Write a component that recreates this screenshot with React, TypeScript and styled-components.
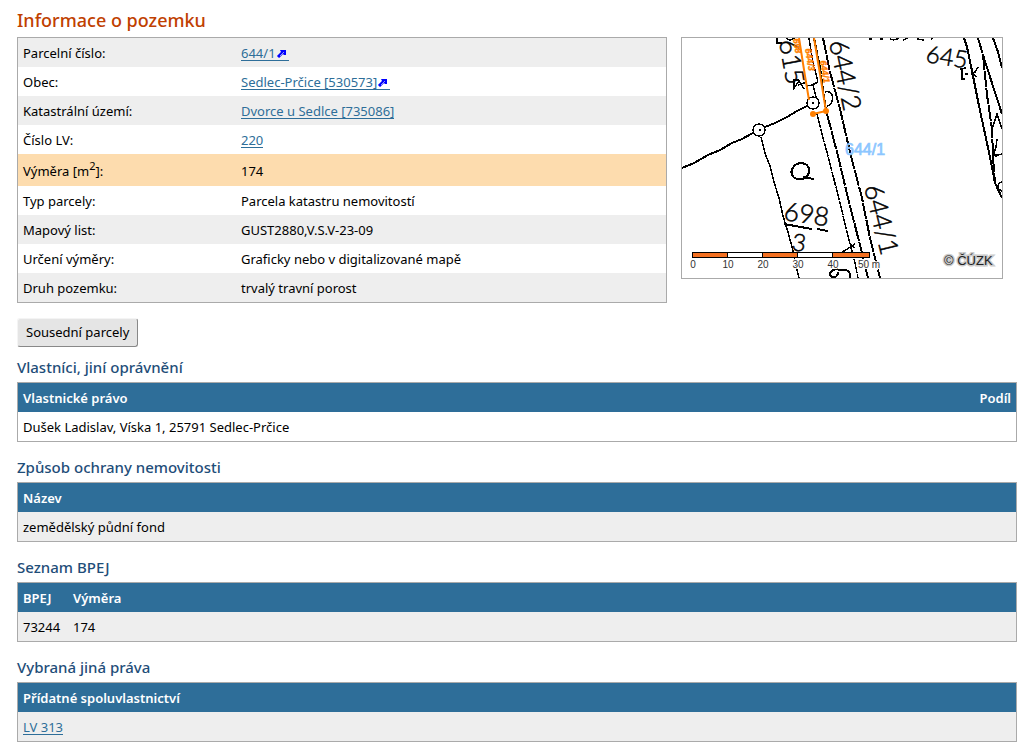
import React from "react";
import styled, { createGlobalStyle } from "styled-components";

const GlobalStyle = createGlobalStyle`
  body {
    margin: 0;
    background: #fff;
    color: #000;
    font: 13px/19px "Noto Sans", "Open Sans", sans-serif;
  }
  * { box-sizing: border-box; }
`;

const Page = styled.main`
  padding: 8px 15px 8px 17px;
`;

const Title = styled.h1`
  margin: 0 0 5px;
  color: #c04000;
  font-size: 18px;
  font-weight: 500;
  line-height: 24px;
`;

const Overview = styled.div`
  display: flex;
  align-items: flex-start;
  gap: 14px;
  padding-right: 14px;
`;

const InfoTable = styled.table`
  flex: 1;
  border: 1px solid #aaa;
  border-collapse: separate;
  border-spacing: 0;
`;

const InfoRow = styled.tr<{ $tone: "grey" | "white" | "accent" }>`
  height: ${(p) => (p.$tone === "accent" ? 32 : 29)}px;
  background: ${(p) => ({ grey: "#eee", white: "#fff", accent: "#fddcae" })[p.$tone]};
`;

const InfoLabel = styled.th`
  width: 218px;
  padding: 2px 5px 0;
  font-weight: 400;
  text-align: left;

  sup {
    font-size: 11px;
    line-height: 0;
    vertical-align: 6px;
  }
`;

const InfoValue = styled.td`
  padding: 2px 5px 0;
`;

const Link = styled.a`
  display: inline-block;
  border-bottom: 1px solid #2e6e99;
  color: #2e6e99;
  line-height: 13px;
  text-decoration: none;
`;

const ArrowIcon = styled.svg`
  width: 13px;
  height: 9px;
`;

const MapFrame = styled.figure`
  flex: 0 0 322px;
  margin: 0;
  border: 1px solid #aaa;

  svg {
    display: block;
    width: 100%;
  }
`;

const Button = styled.button`
  display: block;
  height: 29px;
  margin-top: 15px;
  padding: 0 8px;
  border: 1px solid;
  border-color: #f4f4f4 #888 #888 #f4f4f4;
  border-radius: 3px;
  background: #e5e5e5;
  color: #000;
  font: inherit;
`;

const Section = styled.section`
  padding: 10px 0 5px;
`;

const Heading = styled.h2`
  margin: 0 0 5px;
  color: #1f4e79;
  font-size: 15px;
  font-weight: 500;
  line-height: 20px;
`;

const DataTable = styled.table`
  width: 100%;
  border: 1px solid #aaa;
  border-collapse: separate;
  border-spacing: 0;
`;

const HeadCell = styled.th<{ $width?: number; $end?: boolean }>`
  width: ${(p) => (p.$width ? `${p.$width}px` : "auto")};
  height: 29px;
  padding: 1px 5px 0;
  background: #2e6e99;
  color: #fff;
  font-weight: 600;
  text-align: ${(p) => (p.$end ? "right" : "left")};
`;

const DataCell = styled.td<{ $plain?: boolean }>`
  height: 29px;
  padding: 1px 5px 0;
  background: ${(p) => (p.$plain ? "#fff" : "#eee")};
`;

const Handwritten = styled.text`
  fill: #000;
  stroke: #000;
  stroke-width: 0.5px;
  font-family: Lato, sans-serif;
  font-weight: 300;
`;

const ParcelTag = styled.text`
  fill: #ff7f00;
  stroke: #ff7f00;
  stroke-width: 0.4px;
  font: italic 700 9px "Liberation Sans", sans-serif;
`;

const ScaleText = styled.text`
  fill: #333;
  stroke: #fff;
  stroke-width: 2px;
  paint-order: stroke;
  font: 10px "Liberation Sans", sans-serif;
  text-anchor: middle;
`;

const SelectedLabel = styled.text`
  fill: #8cc6ff;
  stroke: #8cc6ff;
  stroke-width: 0.7px;
  font: 16px "Liberation Sans", sans-serif;
`;

const Copyright = styled.text`
  fill: #222;
  stroke: #ccc;
  stroke-width: 3px;
  paint-order: stroke;
  font: 13px "Liberation Sans", sans-serif;
`;

function External() {
  return (
    <ArrowIcon viewBox="0 0 13 9" aria-hidden="true">
      <path d="M2 8 7 3" stroke="#00f" strokeWidth="3" />
      <path d="M4 1H10V6L8 6 5 3Z" fill="#00f" />
      <path d="M4 7 8 3" stroke="#dde" strokeWidth="0.7" />
    </ArrowIcon>
  );
}

function CadastralMap() {
  return (
    <MapFrame>
      <svg viewBox="0 0 320 240" role="img" aria-label="Katastrální mapa">
        <rect width="320" height="240" fill="#fff" />
        <g fill="none" stroke="#000" strokeWidth="1.5" shapeRendering="crispEdges">
          {/* parcel boundaries left of the road */}
          <path strokeWidth="2" d="M0 130 12 125 26 117 38 112 50 105 60 101 71 95M83 89 93 85 105 79 115 73 125 68" />
          <path d="M79 99 82 111 84 118 88 128 92 144 97 160 101 178 106 194 111 213 114 228 117 240" />
          {/* road */}
          <path strokeDasharray="14 1" d="M127 0 131 24 136 44M135 76 141 100 146 118 158 165 164 190 173 225 176 240" />
          <path strokeWidth="2" strokeDasharray="18 1" d="M132 0 138 30 144 72 150 95 156 118 166 160 180 215 186 240" />
          <path strokeDasharray="16 1" strokeWidth="2" d="M141 0 148 34 158 71 164 97 169 118 180 160 188 200 198 240" />
          {/* boundaries by the right edge */}
          <path strokeWidth="2" d="M282 0 285 9 289 28 297 68 308 119 313 145 320 160" />
          <path strokeWidth="2" strokeDasharray="16 1" d="M296 0 301 17 305 57 310 91 311 119 313 145" />
          <path strokeWidth="2" d="M301 17 309 42 320 76M311 0 316 14 320 30" />
          <path d="M310 91 315 76 320 91M315 101 314 109 311 118 320 116M312 114 314 119M320 144Q315 145 316 151L320 153" />
          {/* boundary marks */}
          <circle cx="77" cy="92" r="6" />
          <circle cx="131" cy="65" r="6" />
          <path d="M143 54C149 52 152 58 150 63C149 67 147 68 145 68M125 48 130 47 136 44M131 47 134 59" />
          <path d="M112 42V50L117 43 122 51M111 42H117M116 47 125 44" />
          <path d="M78 91V93M131 64V66" strokeWidth="2" />
          {/* numbers cut by the top edge */}
          <path d="M187 1H190M198 1H201M208 1Q213 3 217 0M221 2 226 0M235 1 242 2M249 1 251 0" />
          <path d="M95 0V5H100M104 0Q109 4 112 0" />
          {/* land use marks */}
          <path strokeWidth="2" d="M118 125C112 126 108 132 110 137C113 143 123 142 126 137C129 131 126 125 118 125M121 139 132 141" />
          <path d="M278 31 284 30M280 31V41M283 36H286M289 36 293 34 296 29M291 35 294 39M279 41H283" />
          {/* fraction bar */}
          <path strokeWidth="2" d="M102 186 130 191M135 191 146 193" />
          <path d="M159 215 173 206M168 205 172 210" />
          <path strokeWidth="2" d="M158 232C150 229 145 237 150 239Q156 240 156 234M158 232Q169 230 168 240" />
        </g>
        <Handwritten fontSize="26" transform="translate(97 3) rotate(80)">615</Handwritten>
        <Handwritten fontSize="26" transform="translate(147 4) rotate(78)">644/2</Handwritten>
        <Handwritten fontSize="24" transform="translate(243 24) rotate(9)">645</Handwritten>
        <Handwritten fontSize="26" transform="translate(182 149) rotate(76)">644/1</Handwritten>
        <Handwritten fontSize="26" transform="translate(101 182) rotate(8)">698</Handwritten>
        <Handwritten fontSize="24" transform="translate(109 212) rotate(8)">3</Handwritten>

        <g fill="none" stroke="#ff7f00" strokeWidth="2">
          <path d="M117 0 123 38 127 62M132 0 138 36 144 73 131 76" />
        </g>
        <circle cx="131" cy="76" r="3" fill="#ff7f00" />
        <circle cx="144" cy="73" r="3" fill="#ff7f00" />
        <ParcelTag transform="translate(111 1) rotate(80)">698</ParcelTag>
        <ParcelTag transform="translate(123 11) rotate(80)">644/3</ParcelTag>
        <ParcelTag transform="translate(138 23) rotate(80)">644/1</ParcelTag>

        <SelectedLabel x="163" y="117">644/1</SelectedLabel>

        <g stroke="#000" shapeRendering="crispEdges">
          {[0, 1, 2, 3, 4].map((n) => (
            <rect key={n} x={10 + n * 35} y="214" width={n === 4 ? 37 : 35} height="5" fill={n % 2 ? "#fff" : "#f37021"} />
          ))}
        </g>
        {["0", "10", "20", "30", "40", "50 m"].map((label, n) => (
          <ScaleText key={label} x={n === 5 ? 187 : 11 + n * 35} y="230">{label}</ScaleText>
        ))}
        <Copyright x="262" y="227">© ČÚZK</Copyright>
      </svg>
    </MapFrame>
  );
}

type Info = { label: React.ReactNode; value: React.ReactNode; accent?: boolean };

const info: Info[] = [
  { label: "Parcelní číslo:", value: <Link href="#parcela">644/1<External /></Link> },
  { label: "Obec:", value: <Link href="#obec">Sedlec-Prčice [530573]<External /></Link> },
  { label: "Katastrální území:", value: <Link href="#uzemi">Dvorce u Sedlce [735086]</Link> },
  { label: "Číslo LV:", value: <Link href="#lv220">220</Link> },
  { label: <>Výměra [m<sup>2</sup>]:</>, value: "174", accent: true },
  { label: "Typ parcely:", value: "Parcela katastru nemovitostí" },
  { label: "Mapový list:", value: "GUST2880,V.S.V-23-09" },
  { label: "Určení výměry:", value: "Graficky nebo v digitalizované mapě" },
  { label: "Druh pozemku:", value: "trvalý travní porost" },
];

type Column = { name: string; width?: number; end?: boolean };

function DataSection({ title, columns, cells, plain }: {
  title: string;
  columns: Column[];
  cells: React.ReactNode[];
  plain?: boolean;
}) {
  return (
    <Section>
      <Heading>{title}</Heading>
      <DataTable>
        <thead>
          <tr>
            {columns.map((c) => (
              <HeadCell key={c.name} scope="col" $width={c.width} $end={c.end}>{c.name}</HeadCell>
            ))}
          </tr>
        </thead>
        <tbody>
          <tr>
            {cells.map((cell, n) => (
              <DataCell key={n} $plain={plain}>{cell}</DataCell>
            ))}
          </tr>
        </tbody>
      </DataTable>
    </Section>
  );
}

export default function App() {
  return (
    <>
      <GlobalStyle />
      <Page>
        <Title>Informace o pozemku</Title>
        <Overview>
          <InfoTable>
            <tbody>
              {info.map((row, n) => (
                <InfoRow key={n} $tone={row.accent ? "accent" : n % 2 ? "white" : "grey"}>
                  <InfoLabel scope="row">{row.label}</InfoLabel>
                  <InfoValue>{row.value}</InfoValue>
                </InfoRow>
              ))}
            </tbody>
          </InfoTable>
          <CadastralMap />
        </Overview>
        <Button type="button">Sousední parcely</Button>
        <DataSection
          title="Vlastníci, jiní oprávnění"
          columns={[{ name: "Vlastnické právo" }, { name: "Podíl", end: true }]}
          cells={["Dušek Ladislav, Víska 1, 25791 Sedlec-Prčice", ""]}
          plain
        />
        <DataSection
          title="Způsob ochrany nemovitosti"
          columns={[{ name: "Název" }]}
          cells={["zemědělský půdní fond"]}
        />
        <DataSection
          title="Seznam BPEJ"
          columns={[{ name: "BPEJ", width: 50 }, { name: "Výměra" }]}
          cells={["73244", "174"]}
        />
        <DataSection
          title="Vybraná jiná práva"
          columns={[{ name: "Přídatné spoluvlastnictví" }]}
          cells={[<Link key="lv" href="#lv313">LV 313</Link>]}
        />
      </Page>
    </>
  );
}
